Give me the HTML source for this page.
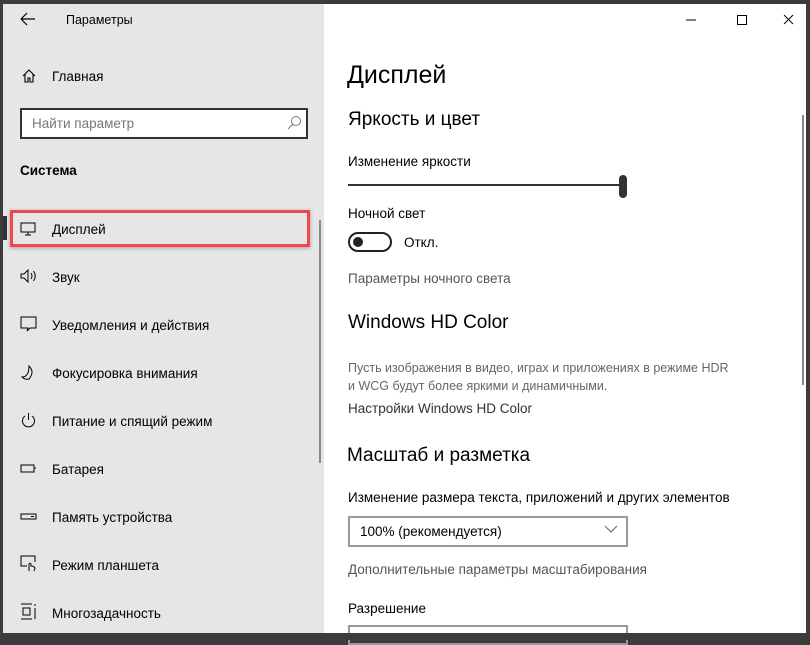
<!DOCTYPE html>
<html><head><meta charset="utf-8"><style>
*{margin:0;padding:0;box-sizing:border-box}
body{width:810px;height:640px;background:#3c3c3c;font-family:"Liberation Sans","DejaVu Sans",sans-serif;position:relative;overflow:hidden;color:#000}
.l{position:absolute;left:3px;top:4px;width:321px;height:629px;background:#e6e6e6}
.r{position:absolute;left:324px;top:4px;width:482px;height:629px;background:#fff}
.t{position:absolute;font-size:13.5px;white-space:nowrap}
.g{color:#555}
svg{position:absolute}
</style></head><body>
<div class="l"></div><div class="r"></div>
<svg style="left:20px;top:12px" width="16" height="14"><path d="M1 7H15M1 7L7 1M1 7L7 13" stroke="#000" stroke-width="1.2" fill="none"/></svg>
<div class="t" style="left:66px;top:13px;font-size:12.5px">Параметры</div>
<svg style="left:21px;top:68px" width="16" height="16"><path d="M2 8L8 2L14 8M4 6V14H7V10H9V14H12V6" stroke="#000" stroke-width="1.1" fill="none"/></svg>
<div class="t" style="left:52px;top:69px">Главная</div>
<div style="position:absolute;left:20px;top:108px;width:288px;height:31px;border:2px solid #333;background:#fff"></div>
<div class="t" style="left:32px;top:116px;color:#777">Найти параметр</div>
<svg style="left:286px;top:115px" width="16" height="16"><circle cx="10" cy="6" r="4.5" stroke="#777" fill="none"/><path d="M7 9L2 14" stroke="#777"/></svg>
<div class="t" style="left:20px;top:163px;font-weight:bold">Система</div>
<div style="position:absolute;left:3px;top:216px;width:4px;height:24px;background:#333"></div>
<div style="position:absolute;left:10px;top:210px;width:300px;height:37px;border:3px solid #f04848;box-shadow:0 1px 4px rgba(0,0,0,.3)"></div>
<div style="position:absolute;left:319px;top:220px;width:2px;height:243px;background:#888"></div>
<svg style="left:20px;top:222px" width="16" height="14"><path d="M1 1H15V10H1ZM8 10V13M5 13H11" stroke="#000" fill="none"/></svg>
<div class="t" style="left:52px;top:222px">Дисплей</div>
<svg style="left:20px;top:269px" width="18" height="14"><path d="M1 5H4L8 1V13L4 9H1Z M11 4Q13 7 11 10 M13.5 2Q17 7 13.5 12" stroke="#000" fill="none"/></svg>
<div class="t" style="left:52px;top:270px">Звук</div>
<svg style="left:20px;top:316px" width="18" height="16"><path d="M1 1H16V12H10L7 15L8 12H1Z" stroke="#000" fill="none"/></svg>
<div class="t" style="left:52px;top:318px">Уведомления и действия</div>
<svg style="left:20px;top:364px" width="18" height="18"><path d="M9 2Q15 8 9 15Q5 16 2 13Q9 13 9 2Z" stroke="#000" fill="none"/></svg>
<div class="t" style="left:52px;top:366px">Фокусировка внимания</div>
<svg style="left:20px;top:412px" width="18" height="18"><path d="M5 4A6 6 0 1 0 12 4M8.5 1V8" stroke="#000" fill="none"/></svg>
<div class="t" style="left:52px;top:414px">Питание и спящий режим</div>
<svg style="left:20px;top:464px" width="18" height="10"><path d="M1 1H14V8H1ZM14 4H16" stroke="#000" fill="none"/></svg>
<div class="t" style="left:52px;top:462px">Батарея</div>
<svg style="left:20px;top:513px" width="18" height="8"><path d="M1 1H16V6H1ZM11 3.5H14" stroke="#000" fill="none"/></svg>
<div class="t" style="left:52px;top:510px">Память устройства</div>
<svg style="left:20px;top:555px" width="18" height="18"><path d="M7 11H1V1H15V7M9 16V9Q10 7.5 11 9V11Q14 11 15 13L14 16" stroke="#000" fill="none"/></svg>
<div class="t" style="left:52px;top:558px">Режим планшета</div>
<svg style="left:20px;top:603px" width="18" height="18"><path d="M1 1H12M1 16H12M3 5H10V12H3ZM15 1V3M15 5V16" stroke="#000" fill="none"/></svg>
<div class="t" style="left:52px;top:606px">Многозадачность</div>
<svg style="left:685px;top:13px" width="120" height="14"><path d="M1 7H11" stroke="#000"/><rect x="52.5" y="2.5" width="9" height="9" stroke="#000" fill="none"/><path d="M99 2L108 11M108 2L99 11" stroke="#000"/></svg>
<div style="position:absolute;left:802px;top:115px;width:2px;height:270px;background:#888"></div>
<div class="t" style="left:347px;top:61px;font-size:25px;font-weight:300">Дисплей</div>
<div class="t" style="left:348px;top:109px;font-size:19px">Яркость и цвет</div>
<div class="t" style="left:348px;top:154px">Изменение яркости</div>
<div style="position:absolute;left:348px;top:184px;width:276px;height:2px;background:#333"></div>
<div style="position:absolute;left:619px;top:175px;width:8px;height:23px;border-radius:4px;background:#333"></div>
<div class="t" style="left:348px;top:206px">Ночной свет</div>
<div style="position:absolute;left:348px;top:232px;width:44px;height:20px;border:2px solid #222;border-radius:10px"></div>
<div style="position:absolute;left:353px;top:237px;width:10px;height:10px;border-radius:5px;background:#222"></div>
<div class="t" style="left:404px;top:235px">Откл.</div>
<div class="t g" style="left:348px;top:271px">Параметры ночного света</div>
<div class="t" style="left:348px;top:312px;font-size:19px">Windows HD Color</div>
<div class="t" style="left:348px;top:359px;font-size:12.5px;color:#666;line-height:18px">Пусть изображения в видео, играх и приложениях в режиме HDR<br>и WCG будут более яркими и динамичными.</div>
<div class="t g" style="left:348px;top:401px;color:#333">Настройки Windows HD Color</div>
<div class="t" style="left:347px;top:445px;font-size:19px">Масштаб и разметка</div>
<div class="t" style="left:348px;top:490px">Изменение размера текста, приложений и других элементов</div>
<div style="position:absolute;left:348px;top:516px;width:280px;height:31px;border:2px solid #999"></div>
<div class="t" style="left:360px;top:524px">100% (рекомендуется)</div>
<svg style="left:604px;top:525px" width="14" height="8"><path d="M1 1L7 7L13 1" stroke="#666" fill="none"/></svg>
<div class="t g" style="left:348px;top:562px">Дополнительные параметры масштабирования</div>
<div class="t" style="left:348px;top:601px">Разрешение</div>
<div style="position:absolute;left:348px;top:625px;width:280px;height:20px;border:2px solid #999"></div>
<div style="position:absolute;left:0;top:633px;width:810px;height:7px;background:#3c3c3c"></div>
</body></html>
